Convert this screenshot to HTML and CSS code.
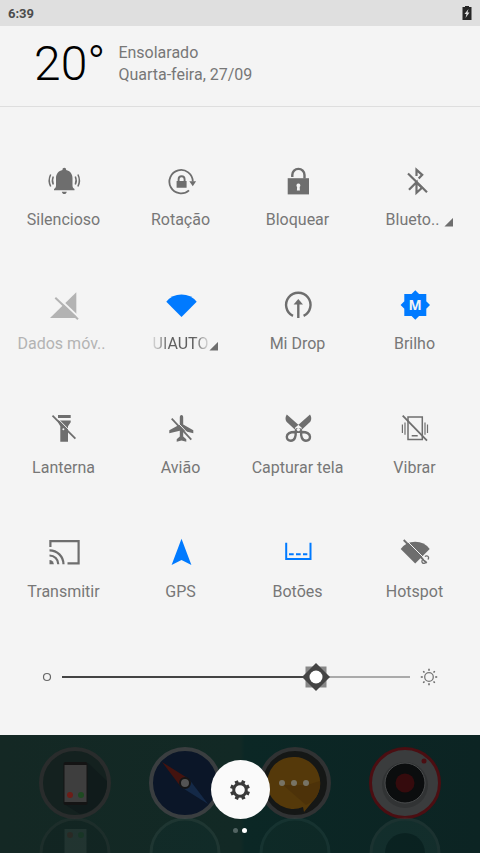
FILE: index.html
```html
<!DOCTYPE html>
<html lang="pt-BR">
<head>
    <meta charset="UTF-8">
    <meta name="viewport" content="width=device-width, initial-scale=1.0">
    <title>Painel de controle</title>
    <link rel="stylesheet" href="styles.css">
</head>
<body>

<div class="status-bar">
    <span>6:39</span>
    <svg class="battery" width="10" height="16" viewBox="0 0 10 16">
        <path d="M3 1h4v1h2.5v13h-9V2H3z" fill="#262626"/>
        <path d="M6.5 4L2.5 9h2l-1 4 4-5.5h-2z" fill="#dfdfdf"/>
    </svg>
</div>

<main class="panel">
    <header class="weather">
        <div class="temperature">20°</div>
        <div class="weather-info">
            <div>Ensolarado</div>
            <div>Quarta-feira, 27/09</div>
        </div>
    </header>

    <div class="toggles">
        <button type="button" class="toggle">
            <svg class="icon" viewBox="0 0 36 36">
                <path d="M18.300 4.700c1.100 0 1.800.8 1.800 1.800v.6c4 .9 6.400 4 6.400 7.900v7.500c0 1.500.5 2.400 2 3.400v1.300H8v-1.300c1.500-1 2-1.900 2-3.400V15c0-3.900 2.500-7 6.500-7.900v-.6c0-1 .7-1.800 1.800-1.800zM15.800 28.800h5c-.4 1.600-1.300 2.300-2.500 2.300s-2.100-.7-2.500-2.300z"/>
                <path class="line" stroke-width="1.500" d="M7.300 13.500q-1.800 4 0 8M4.700 11.500q-3 6 0 12M29.300 13.500q1.800 4 0 8M31.900 11.500q3 6 0 12"/>
            </svg>
            <span class="label">Silencioso</span>
        </button>
        <button type="button" class="toggle">
            <svg class="icon" viewBox="0 0 36 36">
                <path class="line" stroke-width="1.800" d="M26 27.300A11.700 11.700 0 1 1 29.800 18.500"/>
                <path d="M26.300 18.300h6.800l-3.300 5zM13.600 18h10v6.800h-10z"/>
                <path class="line" stroke-width="1.900" d="M15.600 18.500v-2.300a3 3 0 0 1 6 0v2.300"/>
            </svg>
            <span class="label">Rotação</span>
        </button>
        <button type="button" class="toggle">
            <svg class="icon" viewBox="0 0 36 36">
                <path d="M7.700 15.200H29v16.200H7.700z"/>
                <path class="line" stroke-width="2.400" d="M12.300 14v-2a6.100 6.100 0 0 1 12.200 0v3.500"/>
                <path class="cut" d="M18.400 20.500a2 2 0 0 1 1.300 3.500l.2 3.500h-3l.2-3.500a2 2 0 0 1 1.300-3.500z"/>
            </svg>
            <span class="label">Bloquear</span>
        </button>
        <button type="button" class="toggle">
            <svg class="icon" viewBox="0 0 36 36">
                <path class="line" stroke-width="2.200" d="M19.500 13V6.800l5.700 5-3.500 3.600M12 26.700l7.500-7.500v10.600l5.500-5-5.500-5.300"/>
                <path class="line" stroke-width="2.200" d="M11 10.500L30 29.200"/>
            </svg>
            <span class="label expandable">Blueto..<i class="corner"></i></span>
        </button>

        <button type="button" class="toggle disabled">
            <svg class="icon" viewBox="0 0 36 36">
                <path d="M30.300 5.300V31H4z"/>
                <path class="gap" d="M11 9.500l22.500 21.500"/>
                <path class="line" stroke-width="2" d="M9.300 10.700L32 32.300"/>
            </svg>
            <span class="label cropped">Dados móv..</span>
        </button>
        <button type="button" class="toggle active">
            <svg class="icon" viewBox="0 0 36 36">
                <path d="M3.300 14.700Q9 7.400 18.500 7.400t15.200 7.300L18.500 30z"/>
            </svg>
            <span class="label expandable"><span class="fade">UIAUTO</span><i class="corner near"></i></span>
        </button>
        <button type="button" class="toggle">
            <svg class="icon" viewBox="0 0 36 36">
                <path class="line" stroke-width="2.400" d="M13 28.900a12.200 12.200 0 1 1 10.600 0"/>
                <path class="line" stroke-width="2.400" d="M18.300 31V15"/>
                <path d="M18.300 12l4.700 5.400h-9.400z"/>
            </svg>
            <span class="label">Mi Drop</span>
        </button>
        <button type="button" class="toggle active">
            <svg class="icon" viewBox="0 0 36 36">
                <path d="M18.300 3.300L33 18 18.300 32.700 3.600 18zM7.300 7h22v22h-22z"/>
                <text class="auto" x="18" y="23" text-anchor="middle">M</text>
            </svg>
            <span class="label">Brilho</span>
        </button>

        <button type="button" class="toggle">
            <svg class="icon" viewBox="0 0 36 36">
                <path d="M12 4h12.700v3H12zM12 9.500h12.700v1.800L22 15.300v15.500h-7.700V15.300L12 11.300z"/>
                <path class="gap thin" d="M8 3.700l22.500 22.800"/>
                <path class="line" stroke-width="1.800" d="M6.500 4.700l22.900 23"/>
                <circle class="cut" cx="17.400" cy="18.300" r="1"/>
            </svg>
            <span class="label">Lanterna</span>
        </button>
        <button type="button" class="toggle">
            <svg class="icon" viewBox="0 0 36 36">
                <path d="M18.500 4c1.200 0 1.700 1 1.700 2.300v7.200l10.100 5.800v2.900l-10.100-2.500v5.800l3.100 2.700v2.500l-4.800-1.200-4.800 1.200v-2.500l3.100-2.700v-5.800L6.300 22.200v-2.900l10.500-5.800V6.300c0-1.300.5-2.300 1.700-2.300z"/>
                <path class="gap thin" d="M10 6.700l20 21"/>
                <path class="line" stroke-width="1.800" d="M8.700 7.700l19.600 21"/>
            </svg>
            <span class="label">Avião</span>
        </button>
        <button type="button" class="toggle">
            <svg class="icon" viewBox="0 0 36 36">
                <path d="M6.800 3.600L22 17l-4 4.500L6.500 10.700C5 8.800 5.300 5.600 6.800 3.600zM30 3.600L14.800 17l4 4.500 11.500-10.800c1.500-1.900 1.200-5.100-.3-7.100z"/>
                <path class="line" stroke-width="2.400" d="M15.600 21c.5 3.500-.6 8.700-4.800 8.700-2.500 0-4-1.600-4-3.900 0-3 3.300-5.100 8.800-4.800zM21.200 21c-.5 3.500.6 8.700 4.800 8.700 2.500 0 4-1.600 4-3.900 0-3-3.300-5.100-8.800-4.800z"/>
                <path d="M14.500 20l2-3h3.800l2 3-1 3.200-1.600-1.200h-2.600l-1.600 1.200z"/>
                <circle class="cut" cx="18.400" cy="18.600" r="1.700"/>
            </svg>
            <span class="label">Capturar tela</span>
        </button>
        <button type="button" class="toggle">
            <svg class="icon" viewBox="0 0 36 36">
                <path class="line" stroke-width="1.500" d="M11 6h14.300v22.600H11zM14.700 24.800h6"/>
                <path class="line" stroke-width="1.200" d="M5.400 13.500V22M8 11.500v12.200M28 11.500v12.200M30.500 13.500V22"/>
                <path class="line" stroke-width="1.800" d="M5.700 4.700L30 29.700"/>
            </svg>
            <span class="label">Vibrar</span>
        </button>

        <button type="button" class="toggle">
            <svg class="icon" viewBox="0 0 36 36">
                <path class="line" stroke-width="2.200" d="M4.400 12V6.200h28.200v22.100H21.500M3.500 15.300a14 14 0 0 1 14 14M3.500 20.500a8.800 8.800 0 0 1 8.800 8.800"/>
                <path d="M3.500 25a4.300 4.300 0 0 1 4.300 4.300H3.500z"/>
            </svg>
            <span class="label">Transmitir</span>
        </button>
        <button type="button" class="toggle active">
            <svg class="icon" viewBox="0 0 36 36">
                <path d="M18.500 3.700l9.900 26.400-9.900-5-9.900 5z"/>
            </svg>
            <span class="label">GPS</span>
        </button>
        <button type="button" class="toggle active">
            <svg class="icon" viewBox="0 0 36 36">
                <path class="line" stroke-width="2" d="M6.200 7.700V24h24.300V7.700M9 19.300h4.700M16 19.300h4.700M23 19.300h4.300"/>
            </svg>
            <span class="label">Botões</span>
        </button>
        <button type="button" class="toggle">
            <svg class="icon" viewBox="0 0 36 36">
                <path d="M3.700 14Q9 6.800 18.200 6.800T32.700 14L18.200 28.500z"/>
                <path class="gap thin" d="M8.500 4.500l22 22"/>
                <path class="line" stroke-width="1.800" d="M6.700 5L29.700 28"/>
                <circle class="cut" cx="29.500" cy="22.500" r="3"/>
                <path class="line" stroke-width="1.300" d="M28 21.600a2 2 0 1 1 2.800 2.800M26.200 24.500a2 2 0 1 0 2.500 2.700"/>
            </svg>
            <span class="label">Hotspot</span>
        </button>
    </div>

    <div class="brightness">
        <svg width="10" height="10" viewBox="0 0 10 10">
            <circle cx="5" cy="5" r="3.500" fill="none" stroke="#666" stroke-width="1.200"/>
        </svg>
        <input type="range" min="0" max="100" value="75" aria-label="Brilho da tela">
        <svg width="18" height="18" viewBox="0 0 18 18">
            <circle cx="9" cy="9" r="4.300" fill="none" stroke="#777" stroke-width="1.300"/>
            <path d="M9 .8v2M9 15.200v2M.8 9h2M15.200 9h2M3.200 3.200l1.300 1.300M13.500 13.500l1.300 1.300M3.200 14.800l1.300-1.300M13.500 4.500l1.300-1.300" stroke="#666" stroke-width="1.500"/>
        </svg>
    </div>
</main>

<footer class="dock">
    <a href="#" class="app" aria-label="Telefone">
        <svg width="72" height="106" viewBox="0 0 72 106">
            <circle cx="36" cy="36" r="34" fill="#14211f" stroke="#292c2c" stroke-width="4"/>
            <path d="M49 16l19 18a32 32 0 0 1-27 33l-16-10z" fill="#101b1b"/>
            <rect x="24.500" y="15" width="24" height="43" rx="2" fill="#141414"/>
            <rect x="25.500" y="18" width="22" height="37" fill="#3e3e3e"/>
            <circle cx="31" cy="48" r="3" fill="#6d1d17"/>
            <circle cx="42" cy="48" r="3" fill="#1e4a21"/>
            <g class="reflection">
                <circle cx="36" cy="106" r="34" fill="#10201f" stroke="#343b3a" stroke-width="3"/>
                <path d="M25.500 82h22v24h-22z" fill="#42504d"/>
                <circle cx="31" cy="88" r="3" fill="#5c2d27"/>
                <circle cx="42" cy="88" r="3" fill="#24532a"/>
            </g>
        </svg>
    </a>
    <a href="#" class="app" aria-label="Navegador">
        <svg width="72" height="106" viewBox="0 0 72 106">
            <circle cx="36" cy="36" r="34" fill="#0b1628" stroke="#3a3e40" stroke-width="4"/>
            <path d="M13 15l27 17-8 8z" fill="#44130f"/>
            <path d="M59 57L40 32l-8 8z" fill="#142947"/>
            <circle cx="36" cy="36" r="5" fill="#545454" stroke="#151515" stroke-width="2"/>
            <circle class="reflection" cx="36" cy="106" r="34" fill="#10302f" stroke="#3c5450" stroke-width="3"/>
        </svg>
    </a>
    <a href="#" class="app" aria-label="Mensagens">
        <svg width="72" height="106" viewBox="0 0 72 106">
            <circle cx="36" cy="36" r="34" fill="#151716" stroke="#303233" stroke-width="4"/>
            <path d="M36 10a26 26 0 0 1 18 44l-9 11-1-5a26 26 0 1 1-8-50z" fill="#55390a"/>
            <path d="M24 38l23 20 7-4a26 26 0 0 0 7-20L48 38z" fill="#4d3209"/>
            <g fill="#777365">
                <circle cx="23" cy="36" r="3"/>
                <circle cx="35" cy="36" r="3"/>
                <circle cx="47" cy="36" r="3"/>
            </g>
            <circle class="reflection" cx="36" cy="106" r="34" fill="#16322c" stroke="#31504c" stroke-width="3"/>
        </svg>
    </a>
    <a href="#" class="app" aria-label="Câmera">
        <svg width="72" height="106" viewBox="0 0 72 106">
            <circle cx="36" cy="36" r="34.500" fill="#3a3c3d" stroke="#4b0e12" stroke-width="3"/>
            <circle cx="36" cy="38" r="23" fill="#313334"/>
            <circle cx="36" cy="36" r="20" fill="#0b0d0e" stroke="#4a4c4d" stroke-width="1"/>
            <circle cx="36" cy="36" r="9.500" fill="#350b0d"/>
            <circle cx="55" cy="14" r="2.500" fill="#4b0e12"/>
            <g class="reflection">
                <circle cx="36" cy="106" r="34" fill="#254340" stroke="#40504e" stroke-width="3"/>
                <circle cx="36" cy="106" r="20" fill="#081d1c"/>
            </g>
        </svg>
    </a>

    <div class="settings">
        <button type="button" class="settings-button" aria-label="Configurações">
            <svg width="22" height="22" viewBox="-11 -11 22 22">
                <circle r="6.300" fill="none" stroke="#3a3a3a" stroke-width="3"/>
                <path stroke="#3a3a3a" stroke-width="3.600" d="M0-7v-3M0 7v3M-7 0h-3M7 0h3M-5-5l-2-2M5-5l2-2M-5 5l-2 2M5 5l2 2" transform="rotate(22)"/>
            </svg>
        </button>
        <div class="pages">
            <span class="dot"></span>
            <span class="dot current"></span>
        </div>
    </div>
</footer>

</body>
</html>
```

FILE: styles.css
```css
* {
    box-sizing: border-box;
}

body {
    font-family: Roboto, "Liberation Sans", sans-serif;
    background-color: #f4f4f4;
    color: #777;
    margin: 0;
    min-height: 100vh;
    display: flex;
    flex-direction: column;
}

.status-bar {
    height: 26px;
    padding: 0 8px;
    display: flex;
    align-items: center;
    justify-content: space-between;
    background-color: #dfdfdf;
    color: #4c4c4c;
    font-size: 13px;
    font-weight: bold;
}

.weather {
    height: 81px;
    padding: 0 34px 4px;
    display: flex;
    align-items: center;
    gap: 13px;
    border-bottom: 1px solid #dedede;
}

.temperature {
    color: #000;
    font-size: 48px;
    font-weight: 300;
    line-height: 76px;
}

.weather-info {
    font-size: 16px;
    line-height: 22px;
}

/* Quick toggles */
.toggles {
    display: grid;
    grid-template-columns: repeat(4, 1fr);
    row-gap: 57px;
    padding: 56px 7px 0 5px;
}

.toggle {
    display: flex;
    flex-direction: column;
    align-items: center;
    gap: 11px;
    padding: 0;
    border: none;
    background: none;
    color: #6e6e6e;
    font-family: inherit;
    cursor: pointer;
}

.toggle.active {
    color: #007aff;
}

.toggle.disabled,
.toggle.disabled .label {
    color: #b3b3b3;
}

.icon {
    width: 36px;
    height: 36px;
    fill: currentColor;
}

.icon .line {
    fill: none;
    stroke: currentColor;
}

.icon .cut {
    fill: #f4f4f4;
}

.icon .gap {
    fill: none;
    stroke: #f4f4f4;
    stroke-width: 2;
}

.icon .gap.thin {
    stroke-width: 1;
}

.icon .auto {
    fill: #f4f4f4;
    font-family: "Open Sans", sans-serif;
    font-size: 14px;
    font-weight: bold;
}

.label {
    color: #777;
    font-size: 16px;
    line-height: 20px;
    white-space: nowrap;
}

.label.cropped {
    padding-right: 4px;
}

.label.expandable {
    display: flex;
    align-items: center;
    padding-left: 10px;
}

.fade {
    color: #606060;
    -webkit-mask-image: linear-gradient(to right, rgba(0, 0, 0, 0.2), #000 30%, #000 75%, rgba(0, 0, 0, 0.2));
    mask-image: linear-gradient(to right, rgba(0, 0, 0, 0.2), #000 30%, #000 75%, rgba(0, 0, 0, 0.2));
}

.corner {
    width: 9px;
    height: 9px;
    margin: 4px 0 0 5px;
    background-color: #6e6e6e;
    clip-path: polygon(100% 0, 100% 100%, 0 100%);
}

.corner.near {
    margin-left: 1px;
}

/* Brightness slider */
.brightness {
    display: flex;
    align-items: center;
    gap: 10px;
    padding: 61px 42px 44px;
}

.brightness input {
    flex: 1;
    min-width: 0;
    height: 28px;
    margin: 0;
    appearance: none;
    -webkit-appearance: none;
    background: linear-gradient(to right, #444 73%, #aaa 73%) center / 100% 2px no-repeat;
    cursor: pointer;
}

.brightness input::-webkit-slider-thumb {
    -webkit-appearance: none;
    width: 28px;
    height: 28px;
    border: none;
    background: url("data:image/svg+xml,%3Csvg xmlns='http://www.w3.org/2000/svg' viewBox='0 0 28 28'%3E%3Cpath d='M3.500 3.500h21v21h-21z' fill='%23888'/%3E%3Cpath d='M14 0l14 14-14 14L0 14z' fill='%23444'/%3E%3Ccircle cx='14' cy='14' r='6.500' fill='%23fff'/%3E%3C/svg%3E") center / 100% no-repeat;
}

/* Dimmed home screen behind the panel */
.dock {
    position: relative;
    flex: 1;
    min-height: 118px;
    padding: 12px 39px 0;
    display: flex;
    justify-content: space-between;
    overflow: hidden;
    background: linear-gradient(to right, #142824, #122925 50%, #0b2725 51%, #0c2423);
}

.app {
    height: 106px;
}

.app svg {
    display: block;
    overflow: visible;
}

.reflection {
    opacity: 0.3;
}

.settings {
    position: absolute;
    top: 25px;
    left: 0;
    right: 0;
    display: flex;
    flex-direction: column;
    align-items: center;
    gap: 9px;
    pointer-events: none;
}

.settings-button {
    width: 59px;
    height: 59px;
    padding: 0;
    border: none;
    border-radius: 50%;
    background-color: #fafafa;
    display: flex;
    align-items: center;
    justify-content: center;
    cursor: pointer;
    pointer-events: auto;
}

.pages {
    display: flex;
    gap: 4px;
}

.dot {
    width: 5px;
    height: 5px;
    border-radius: 50%;
    background-color: #536462;
}

.dot.current {
    background-color: #fff;
}
```
